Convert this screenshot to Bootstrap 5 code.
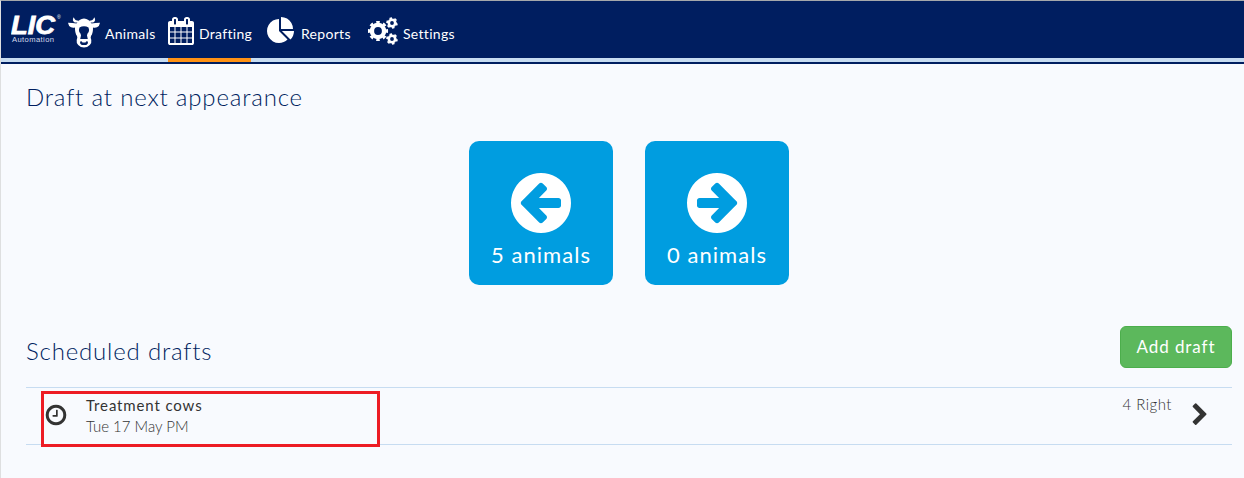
<!DOCTYPE html>
<html lang="en">
<head>
<meta charset="utf-8">
<title>Drafting</title>
<link href="https://cdn.jsdelivr.net/npm/bootstrap@5.3.0/dist/css/bootstrap.min.css" rel="stylesheet">
<style>
body{font-family:Lato,"Liberation Sans",sans-serif;background:#f8fafe;color:#333;height:478px;overflow:hidden;border-top:1px solid #a5a8ab;border-left:1px solid #dedfe0;line-height:1.3}
svg{display:block;flex:none}
.topbar{height:63px;background:#001e60;border-bottom:2px solid #001e60;padding:0 0 0 10px;position:relative}
.topbar .stripe{background:#c7dcf1;height:4px;position:absolute;left:0;right:0;bottom:0}
.tab{height:61px;color:#fff;text-decoration:none;font-size:14px;letter-spacing:.3px;padding-top:16px;position:relative;border-bottom:4px solid transparent;white-space:nowrap}
.tab.active{border-color:#ff9114}
.tab span{line-height:18px;margin-top:8px}
.brandmark{width:57px}
.heading{font-size:24px;font-weight:300;letter-spacing:.82px;color:#001e60;line-height:28px;margin:0;white-space:nowrap}
.tile{width:144px;height:144px;border-radius:10px;background:#009de0;color:#fff;text-decoration:none;padding-top:27px}
.tile span{font-size:22px;letter-spacing:1.05px;line-height:28px;margin-top:3px;white-space:nowrap}
.btn-draft{background:#5cb85c;border:1px solid #4cae4c;color:#fff;width:112px;height:42px;font-size:17px;letter-spacing:.9px;border-radius:6px;padding:0;white-space:nowrap}
.draftrow{height:58px;border-top:1px solid #c7dcf1;border-bottom:1px solid #c7dcf1;position:relative;font-size:15px;line-height:21px}
.draftname{letter-spacing:.87px}
.draftside{letter-spacing:.5px;margin-top:6px}
.marker{position:absolute;left:15px;top:3px;width:339px;height:56px;border:3px solid #ed1c24}
</style>
</head>
<body>
<nav class="topbar d-flex">
  <div class="stripe"></div>
  <svg class="brandmark" height="60" viewBox="11 1 57 60" fill="#fff" font-family="Liberation Sans, sans-serif"><text x="11" y="34" font-size="25" font-weight="700" font-style="italic" textLength="44" lengthAdjust="spacingAndGlyphs" stroke="#fff" stroke-width=".8">LIC</text><text x="57" y="19" font-size="5">®</text><text x="12" y="42" font-size="7.6" textLength="42" fill="#d5dcec">Automation</text></svg>
  <a class="tab d-flex" href="#" style="width:100px"><svg width="32" height="31" viewBox="68 17 32 31" fill="#fff"><path d="M73.800 17.200q-2.300 3.300 1 5.300h3l1-1.700q-4 0-5-3.600zM94.200 17.200q2.300 3.300-1 5.300h-3l-1-1.700q4 0 5-3.600z"/><path d="M68 22.800l4.500.2 4 .5q2.500-4.700 7.500-5 5 .3 7.500 5l4-.5 4.500-.2q-.5 3.500-3 4.500-2 .7-4 .1.200 5.600-2 8.600-.8 1.500.3 4 .5 3.500-1.500 5-2.500 2.500-5.800 2.500t-5.800-2.500q-2-1.500-1.500-5 1.100-2.500.3-4-2.200-3-2-8.600-2 .6-4-.1-2.500-1-3-4.500z"/><path fill="#001e60" d="M79.500 27.500q2-1.200 4.500-1.200t4.500 1.200q1 2.500.2 4.500-1.700 1.500-1.700 3.500l.8 3.500h-7.600l.8-3.500q0-2-1.700-3.500-.8-2 .2-4.500zM80 41.800q1.500-1.200 2.500.7h3q1-1.900 2.500-.7.300 2.200-1.800 3.100h-4.400q-2.100-.9-1.800-3.100z"/></svg><span style="margin-left:5px">Animals</span></a>
  <a class="tab active d-flex" href="#" style="width:83px"><svg width="26" height="28" viewBox="64 0 1664 1792" fill="#fff"><path d="M192 1664h288v-288h-288v288zm352 0h320v-288h-320v288zm-352-352h288v-320h-288v320zm352 0h320v-320h-320v320zm-352-384h288v-288h-288v288zm736 736h320v-288h-320v288zm-384-736h320v-288h-320v288zm768 736h288v-288h-288v288zm-384-352h320v-320h-320v320zm-352-864v-288q0-13-9.500-22.500t-22.500-9.500h-64q-13 0-22.500 9.500t-9.500 22.500v288q0 13 9.500 22.500t22.500 9.500h64q13 0 22.500-9.500t9.500-22.500zm736 864h288v-320h-288v320zm-384-384h320v-288h-320v288zm384 0h288v-288h-288v288zm32-480v-288q0-13-9.500-22.500t-22.500-9.500h-64q-13 0-22.500 9.500t-9.500 22.500v288q0 13 9.500 22.500t22.500 9.500h64q13 0 22.500-9.500t9.500-22.500zm384-64v1280q0 52-38 90t-90 38h-1408q-52 0-90-38t-38-90v-1280q0-52 38-90t90-38h128v-96q0-66 47-113t113-47h64q66 0 113 47t47 113v96h384v-96q0-66 47-113t113-47h64q66 0 113 47t47 113v96h128q52 0 90 38t38 90z"/></svg><span style="margin-left:5px">Drafting</span></a>
  <a class="tab d-flex" href="#" style="width:100px;padding-left:16px"><svg width="28" height="28" viewBox="0 0 1792 1792" fill="#fff"><path d="M768 890l546 546q-106 108-247.500 168t-298.500 60q-209 0-385.500-103t-279.500-279.500-103-385.500 103-385.500 279.500-279.500 385.500-103v762zm187 6h773q0 157-60 298.500t-168 247.500zm709-128h-768v-768q209 0 385.500 103t279.500 279.500 103 385.500z"/></svg><span style="margin-left:6px">Reports</span></a>
  <a class="tab d-flex" href="#" style="margin-left:17px"><svg width="30" height="28" viewBox="0 0 30 28" fill="none" stroke="#fff"><circle cx="10" cy="14" r="6.100" stroke-width="4.400"/><circle cx="10" cy="14" r="8.800" stroke-width="2.600" pathLength="80" stroke-dasharray="5 5" stroke-dashoffset="2.500"/><circle cx="24" cy="6" r="3.200" stroke-width="2.600"/><circle cx="24" cy="6" r="4.900" stroke-width="1.900" pathLength="60" stroke-dasharray="5 5"/><circle cx="24" cy="22" r="3.200" stroke-width="2.600"/><circle cx="24" cy="22" r="4.900" stroke-width="1.900" pathLength="60" stroke-dasharray="5 5"/></svg><span style="margin-left:5px">Settings</span></a>
</nav>
<main style="padding:19px 12px 0 25px">
  <h1 class="heading">Draft at next appearance</h1>
  <div class="d-flex justify-content-center" style="gap:32px;margin-top:30px">
    <a class="tile d-flex flex-column align-items-center" href="#"><svg width="70" height="70" viewBox="0 0 1792 1792" fill="#fff"><path id="arr" d="M1408 960v-128q0-26-19-45t-45-19h-502l189-189q19-19 19-45t-19-45l-91-91q-18-18-45-18t-45 18l-362 362-91 91q-18 18-18 45t18 45l91 91 362 362q18 18 45 18t45-18l91-91q18-18 18-45t-18-45l-189-189h502q26 0 45-19t19-45zm256-64q0 209-103 385.500t-279.500 279.500-385.500 103-385.500-103-279.500-279.500-103-385.500 103-385.500 279.500-279.500 385.500-103 385.500 103 279.500 279.500 103 385.500z"/></svg><span>5 animals</span></a>
    <a class="tile d-flex flex-column align-items-center" href="#"><svg width="70" height="70" viewBox="0 0 1792 1792" fill="#fff"><use href="#arr" transform="translate(1792 0) scale(-1 1)"/></svg><span>0 animals</span></a>
  </div>
  <div class="d-flex justify-content-between" style="margin-top:41px">
    <h2 class="heading" style="margin-top:11px">Scheduled drafts</h2>
    <button class="btn btn-draft">Add draft</button>
  </div>
  <div class="draftrow d-flex" style="margin-top:19px">
    <div class="marker"></div>
    <svg width="24" height="24" viewBox="0 0 1792 1792" fill="#333" style="margin:15px 0 0 18px"><path d="M1024 544v448q0 14-9 23t-23 9h-320q-14 0-23-9t-9-23v-64q0-14 9-23t23-9h224v-352q0-14 9-23t23-9h64q14 0 23 9t9 23zm416 352q0-148-73-273t-198-198-273-73-273 73-198 198-73 273 73 273 198 198 273 73 273-73 198-198 73-273zm224 0q0 209-103 385.500t-279.500 279.500-385.500 103-385.500-103-279.500-279.500-103-385.500 103-385.500 279.500-279.500 385.500-103 385.500 103 279.500 279.500 103 385.500z"/></svg>
    <div style="margin:7px 0 0 18px"><div class="draftname">Treatment cows</div><div class="fw-light">Tue 17 May PM</div></div>
    <div class="draftside ms-auto fw-light">4 Right</div>
    <svg width="24" height="24" viewBox="0 0 1792 1792" fill="#333" style="margin:15px 20px 0 16px"><path d="M1363 877l-742 742q-19 19-45 19t-45-19l-166-166q-19-19-19-45t19-45l531-531-531-531q-19-19-19-45t19-45l166-166q19-19 45-19t45 19l742 742q19 19 19 45t-19 45z"/></svg>
  </div>
</main>
<script src="https://cdn.jsdelivr.net/npm/bootstrap@5.3.0/dist/js/bootstrap.bundle.min.js"></script>
</body>
</html>
